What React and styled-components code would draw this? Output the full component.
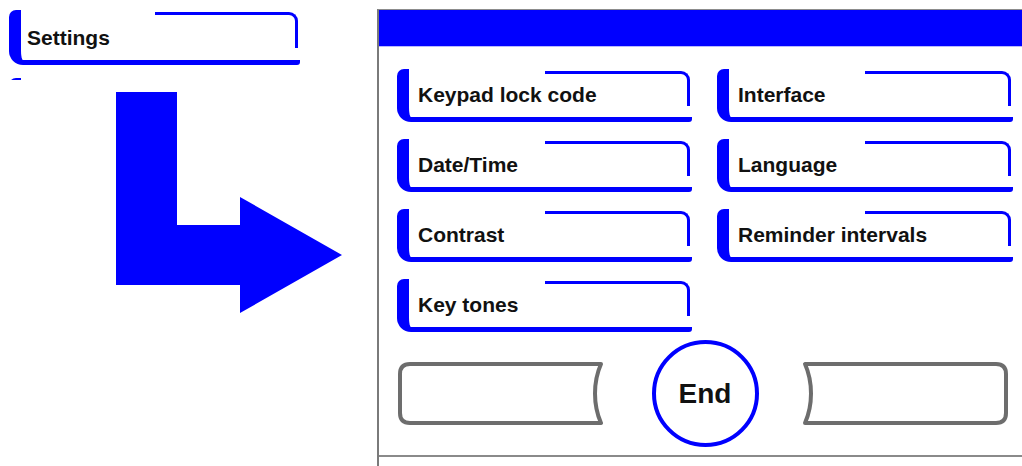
import React from "react";
import styled, { createGlobalStyle } from "styled-components";

const BLUE = "#0000ff";

const Global = createGlobalStyle`
  html, body { margin: 0; padding: 0; background: #ffffff; }
  body { font-family: "Liberation Sans", Arial, sans-serif; overflow: hidden; }
`;

const Page = styled.div`
  display: flex;
  width: 1022px;
  height: 466px;
  overflow: hidden;
  background: #fff;
`;

const LeftPane = styled.div`
  box-sizing: border-box;
  width: 377px;
  flex: none;
  padding: 10px 0 0 9px;
  display: flex;
  flex-direction: column;
`;

const MenuClip = styled.div`
  width: 291px;
  height: 70px;
  overflow: hidden;
  display: flex;
  flex-direction: column;
  gap: 13px;
`;

const MenuButton = styled.div`
  position: relative;
  box-sizing: border-box;
  flex: none;
  height: ${(p) => p.$h || 53}px;
  border-left: 12px solid ${BLUE};
  border-bottom: 5px solid ${BLUE};
  border-radius: 7px 0 3px 14px;
  display: flex;
  align-items: center;
  padding: ${(p) => p.$pt ?? 4}px 0 0 ${(p) => p.$pl ?? 9}px;
  font: bold 21px "Liberation Sans", Arial, sans-serif;
  color: #111;
  white-space: nowrap;
  background: #fff;

  &::after {
    content: "";
    position: absolute;
    box-sizing: border-box;
    top: 2px;
    right: 2px;
    width: calc(50% + 4px);
    height: 72%;
    border-top: 3px solid ${BLUE};
    border-right: 3px solid ${BLUE};
    border-top-right-radius: 9px;
  }
`;

const Arrow = styled.svg`
  display: block;
  margin: 12px 0 0 107px;
  flex: none;
`;

const Panel = styled.div`
  flex: 1;
  margin-top: 9px;
  border-left: 2px solid #7a7a7a;
  border-top: 1px solid #8c8c8c;
  display: flex;
  flex-direction: column;
`;

const Header = styled.div`
  height: 36px;
  background: ${BLUE};
  border-bottom: 1px solid #b8b8ff;
`;

const Body = styled.div`
  padding: 22px 9px 0 18px;
`;

const MenuGrid = styled.div`
  display: grid;
  grid-template-columns: 295px 296px;
  grid-auto-rows: 53px;
  column-gap: 25px;
  row-gap: 17px;
`;

const Footer = styled.div`
  margin-top: 8px;
  display: grid;
  grid-template-columns: 1fr auto 1fr;
  align-items: center;
`;

const SoftKeyBox = styled.div`
  width: ${(p) => p.$w}px;
  height: 63px;
  justify-self: ${(p) => (p.$side === "left" ? "start" : "end")};
  margin-right: ${(p) => (p.$side === "right" ? 5 : 0)}px;
  margin-left: ${(p) => (p.$side === "left" ? 1 : 0)}px;
  svg { display: block; }
`;

const EndButton = styled.div`
  box-sizing: border-box;
  width: 107px;
  height: 107px;
  border: 4px solid ${BLUE};
  border-radius: 50%;
  display: flex;
  align-items: center;
  justify-content: center;
  font: bold 28px "Liberation Sans", Arial, sans-serif;
  color: #111;
  background: #fff;
`;

const Divider = styled.div`
  margin-top: 8px;
  border-top: 2px solid #8a8a8a;
`;

function SoftKey({ side }) {
  const w = side === "left" ? 209 : 208;
  const d =
    side === "left"
      ? "M 12 2 H 203 C 195 20 195 43 203 61 H 12 Q 2 61 2 51 V 12 Q 2 2 12 2 Z"
      : "M 5 2 H 196 Q 206 2 206 12 V 51 Q 206 61 196 61 H 5 C 13 43 13 20 5 2 Z";
  return (
    <SoftKeyBox $side={side} $w={w}>
      <svg width={w} height="63" viewBox={`0 0 ${w} 63`}>
        <path d={d} fill="#fff" stroke="#6d6d6d" strokeWidth="4" strokeLinejoin="round" />
      </svg>
    </SoftKeyBox>
  );
}

const items = [
  "Keypad lock code",
  "Interface",
  "Date/Time",
  "Language",
  "Contrast",
  "Reminder intervals",
  "Key tones",
];

export default function App() {
  return (
    <>
      <Global />
      <Page>
        <LeftPane>
          <MenuClip>
            <MenuButton $h={55} $pt={6} $pl={6}>Settings</MenuButton>
            <MenuButton $h={55} />
          </MenuClip>
          <Arrow width="226" height="221" viewBox="0 0 226 221">
            <polygon
              points="0,0 61,0 61,133 124,133 124,105 226,163 124,221 124,193 0,193"
              fill={BLUE}
            />
          </Arrow>
        </LeftPane>
        <Panel>
          <Header />
          <Body>
            <MenuGrid>
              {items.map((t) => (
                <MenuButton key={t}>{t}</MenuButton>
              ))}
            </MenuGrid>
            <Footer>
              <SoftKey side="left" />
              <EndButton>End</EndButton>
              <SoftKey side="right" />
            </Footer>
          </Body>
          <Divider />
        </Panel>
      </Page>
    </>
  );
}
